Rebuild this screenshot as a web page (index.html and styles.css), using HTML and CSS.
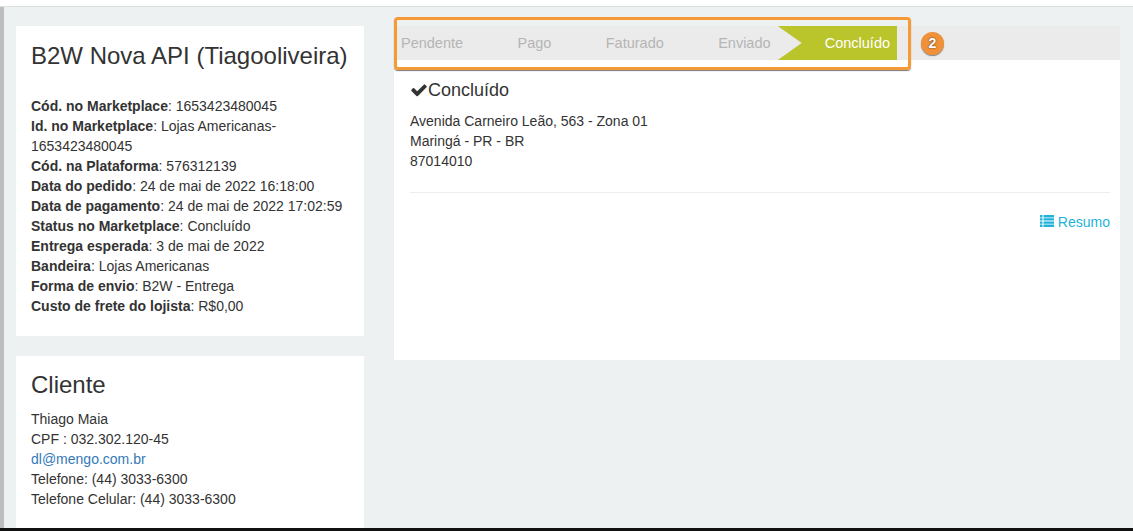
FILE: index.html
```html
<!DOCTYPE html>
<html lang="en">
<head>
    <meta charset="UTF-8">
    <title>Pedido</title>
    <link rel="stylesheet" href="styles.css">
</head>
<body>
    <div class="page">
        <div class="top-bar"></div>
        <div class="main">
            <div class="left-col">
                <div class="card info-card">
                    <h2>B2W Nova API (Tiagooliveira)</h2>
                    <div class="info-list">
                        <div><b>Cód. no Marketplace</b>: 1653423480045</div>
                        <div><b>Id. no Marketplace</b>: Lojas Americanas-1653423480045</div>
                        <div><b>Cód. na Plataforma</b>: 576312139</div>
                        <div><b>Data do pedido</b>: 24 de mai de 2022 16:18:00</div>
                        <div><b>Data de pagamento</b>: 24 de mai de 2022 17:02:59</div>
                        <div><b>Status no Marketplace</b>: Concluído</div>
                        <div><b>Entrega esperada</b>: 3 de mai de 2022</div>
                        <div><b>Bandeira</b>: Lojas Americanas</div>
                        <div><b>Forma de envio</b>: B2W - Entrega</div>
                        <div><b>Custo de frete do lojista</b>: R$0,00</div>
                    </div>
                </div>
                <div class="card client-card">
                    <h2>Cliente</h2>
                    <div>Thiago Maia</div>
                    <div>CPF : 032.302.120-45</div>
                    <div><a href="#" class="mail">dl@mengo.com.br</a></div>
                    <div>Telefone: (44) 3033-6300</div>
                    <div>Telefone Celular: (44) 3033-6300</div>
                </div>
            </div>
            <div class="right-col">
                <div class="steps">
                    <div class="step">Pendente</div>
                    <div class="step">Pago</div>
                    <div class="step">Faturado</div>
                    <div class="step">Enviado</div>
                    <div class="step current">Concluído</div>
                </div>
                <div class="highlight"></div>
                <div class="badge">2</div>
                <div class="detail">
                    <h3>
                        <svg class="icon-check" viewBox="0 0 1792 1792"><path d="M1671 566q0 40-28 68l-724 724-136 136q-28 28-68 28t-68-28l-136-136-362-362q-28-28-28-68t28-68l136-136q28-28 68-28t68 28l294 295 656-657q28-28 68-28t68 28l136 136q28 28 28 68z"/></svg>Concluído
                    </h3>
                    <div>Avenida Carneiro Leão, 563 - Zona 01</div>
                    <div>Maringá - PR - BR</div>
                    <div>87014010</div>
                    <hr>
                    <div class="summary">
                        <a href="#">
                            <svg class="icon-list" viewBox="0 0 14 12"><path d="M0 0h2.5v2.4H0zM3.5 0H14v2.4H3.5zM0 3.2h2.5v2.4H0zM3.5 3.2H14v2.4H3.5zM0 6.4h2.5v2.4H0zM3.5 6.4H14v2.4H3.5zM0 9.6h2.5V12H0zM3.5 9.6H14V12H3.5z"/></svg>
                            Resumo
                        </a>
                    </div>
                </div>
            </div>
        </div>
        <div class="bottom-bar"></div>
    </div>
</body>
</html>
```

FILE: styles.css
```css
* {
    box-sizing: border-box;
}
body {
    margin: 0;
    font-family: "Liberation Sans", Arial, sans-serif;
    font-size: 14px;
    line-height: 20px;
    color: #333;
}
.page {
    display: flex;
    flex-direction: column;
    height: 531px;
    overflow: hidden;
    background: #eef1f2;
}
.top-bar {
    height: 7px;
    flex: none;
    background: #fff;
    border-bottom: 1px solid #dcdfe0;
}
.main {
    flex: 1;
    min-height: 0;
    display: flex;
    gap: 30px;
    padding: 19px 13px 0 12px;
    border-left: 4px solid #bdbdbd;
    overflow: hidden;
}
.bottom-bar {
    height: 3px;
    flex: none;
    background: #111;
}
.left-col {
    width: 348px;
    flex: none;
    display: flex;
    flex-direction: column;
    gap: 20px;
}
.right-col {
    flex: 1;
    position: relative;
}
.card {
    background: #fff;
    padding: 15px;
}
.card h2 {
    margin: 0;
    font-size: 24px;
    font-weight: 400;
    line-height: 30px;
}
.info-card {
    height: 310px;
}
.info-list {
    margin-top: 25px;
}
.client-card {
    flex: 1;
    padding-top: 14px;
}
.client-card h2 {
    margin-bottom: 9px;
}
.mail {
    color: #337ab7;
    text-decoration: none;
}
.steps {
    display: flex;
    height: 34px;
    padding-left: 7px;
    background: #ebebeb;
    font-size: 14.5px;
    line-height: 34px;
    color: #b5b5b5;
}
.step {
    padding: 0 27.2px;
}
.step:first-child {
    padding-left: 0;
}
.step.current {
    margin-left: -20px;
    padding: 0 7px 0 47px;
    color: #fff;
    background: #bac42b;
    clip-path: polygon(0 0, 100% 0, 100% 100%, 0 100%, 24px 50%);
}
.highlight {
    position: absolute;
    left: 0;
    top: -9px;
    width: 517px;
    height: 53px;
    border: 3px solid #f59a37;
    border-radius: 4px;
    box-shadow: 0 1px 1px #777;
}
.badge {
    position: absolute;
    left: 527px;
    top: 6px;
    width: 23px;
    height: 23px;
    border-radius: 50%;
    background: #f0913a;
    box-shadow: 0 1px 1px #888;
    color: #fff;
    font-size: 14px;
    font-weight: 700;
    line-height: 23px;
    text-align: center;
    text-shadow: 0 0 2px #4a2a08;
}
.detail {
    height: 300px;
    padding: 19px 10px 0 16px;
    background: #fff;
}
.detail h3 {
    display: flex;
    align-items: center;
    margin: 0 0 10px;
    font-size: 18px;
    font-weight: 400;
    line-height: 22px;
}
.icon-check {
    width: 18px;
    height: 18px;
    flex: none;
    fill: #333;
}
.detail hr {
    margin: 21px 0 19px;
    border: 0;
    border-top: 1px solid #eee;
}
.summary {
    text-align: right;
}
.summary a {
    color: #1fb3d8;
    text-decoration: none;
}
.icon-list {
    width: 14px;
    height: 12px;
    fill: #1fb3d8;
}
```
